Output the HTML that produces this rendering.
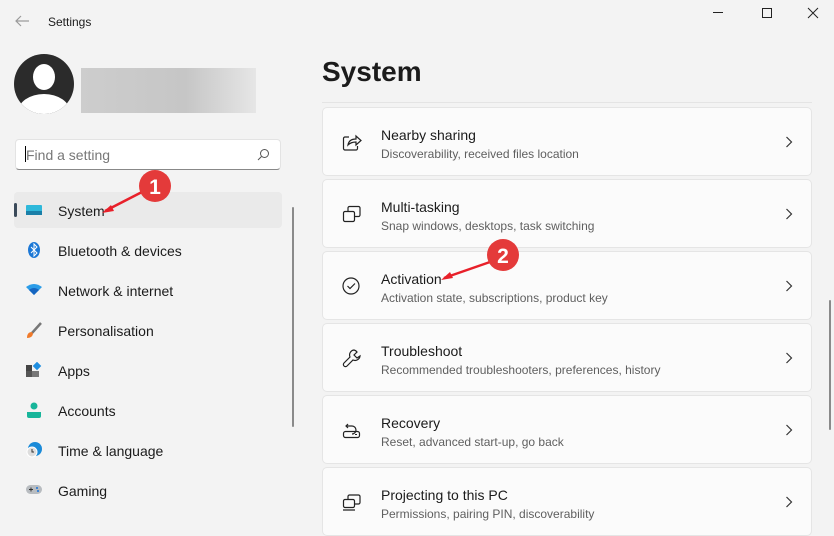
<!DOCTYPE html>
<html><head><style>
*{margin:0;padding:0;box-sizing:border-box}
body{width:834px;height:526px;overflow:hidden;background:#f3f3f3;font-family:"Liberation Sans",sans-serif;color:#1b1b1b;position:relative}
.abs{position:absolute}
.nav{position:absolute;left:14px;width:268px;height:36px;font-size:14px;display:flex;align-items:center}
.nav span{position:absolute;left:44px;top:11px}
.nav .ic{position:absolute;left:12px;top:10px;width:16px;height:16px}
.card{position:absolute;left:322px;width:490px;height:69px;background:#fbfbfb;border:1px solid #e5e5e5;border-radius:5px}
.card .t{position:absolute;left:58px;top:19px;font-size:14px;color:#1b1b1b}
.card .s{position:absolute;left:58px;top:39px;font-size:12px;color:#5f5f5f}
.card svg.i{position:absolute;left:19px;top:24px}
.card .ch{position:absolute;right:18px;top:28px}
</style></head><body>
<svg class="abs" style="left:14px;top:14px" width="16" height="14"><path d="M15 7H2M7 2L2 7l5 5" stroke="#9a9a9a" stroke-width="1.2" fill="none"/></svg>
<div class="abs" style="left:48px;top:15px;font-size:12px">Settings</div>
<svg class="abs" style="left:712px;top:6px" width="112" height="16"><path d="M1 6.5h10" stroke="#222"/><rect x="50.5" y="2.5" width="9" height="9" fill="none" stroke="#222"/><path d="M96 2l10 10M106 2l-10 10" stroke="#222"/></svg>
<svg class="abs" style="left:14px;top:54px" width="60" height="60"><defs><clipPath id="c"><circle cx="30" cy="30" r="30"/></clipPath></defs><circle cx="30" cy="30" r="30" fill="#2b2b2b"/><g clip-path="url(#c)" fill="#fff"><ellipse cx="30" cy="23" rx="11" ry="13"/><ellipse cx="30" cy="58" rx="26" ry="18"/></g></svg>
<div class="abs" style="left:81px;top:68px;width:175px;height:45px;background:linear-gradient(90deg,#cdcdcd,#c6c6c6 60%,#e6e6e6)"></div>
<div class="abs" style="left:15px;top:139px;width:266px;height:31px;background:#fff;border:1px solid #e3e3e3;border-bottom:1px solid #888;border-radius:4px"></div>
<div class="abs" style="left:25px;top:146px;width:1px;height:16px;background:#000"></div>
<div class="abs" style="left:26px;top:147px;font-size:14px;color:#777">Find a setting</div>
<svg class="abs" style="left:257px;top:148px" width="13" height="13"><circle cx="7.5" cy="5.5" r="4" fill="none" stroke="#555"/><path d="M4.5 8.5L1 12" stroke="#555"/></svg>
<div class="abs" style="left:14px;top:192px;width:268px;height:36px;background:#eaeaea;border-radius:4px"></div>
<div class="abs" style="left:14px;top:203px;width:3px;height:14px;background:#3a4a5a;border-radius:2px"></div>
<div class="nav" style="top:192px"><svg class="ic" width="16" height="16"><rect x="0" y="3" width="16" height="10" rx="1" fill="#2eb8da"/><rect x="0" y="9" width="16" height="4" fill="#1a7fa8"/></svg><span>System</span></div>
<div class="nav" style="top:232px"><svg class="ic" width="16" height="16"><ellipse cx="8" cy="8" rx="6" ry="8" fill="#1c78d6"/><path d="M5 5l6 6-3 3V2l3 3-6 6" stroke="#fff" fill="none"/></svg><span>Bluetooth &amp; devices</span></div>
<div class="nav" style="top:272px"><svg class="ic" width="16" height="16"><path d="M0 5Q8-1 16 5L8 13Z" fill="#2a9ce8"/><path d="M3 8Q8 4 13 8L8 13Z" fill="#1565c0"/></svg><span>Network &amp; internet</span></div>
<div class="nav" style="top:312px"><svg class="ic" width="16" height="16"><path d="M15 1L6 11" stroke="#777" stroke-width="2.5"/><path d="M1 16Q1 10 6 10l1 2Q6 16 1 16Z" fill="#f07a2a"/></svg><span>Personalisation</span></div>
<div class="nav" style="top:352px"><svg class="ic" width="16" height="16"><rect x="0" y="3" width="6" height="6" fill="#444"/><rect x="0" y="9" width="6" height="6" fill="#555"/><rect x="6" y="9" width="7" height="6" fill="#777"/><rect x="8" y="1" width="6" height="6" fill="#1f8ee0" transform="rotate(45 11 4)"/></svg><span>Apps</span></div>
<div class="nav" style="top:392px"><svg class="ic" width="16" height="16"><circle cx="8" cy="4" r="3.5" fill="#17b59a"/><path d="M1 10h14v4a2 2 0 0 1-2 2H3a2 2 0 0 1-2-2z" fill="#17b59a"/></svg><span>Accounts</span></div>
<div class="nav" style="top:432px"><svg class="ic" width="16" height="16"><circle cx="9" cy="7" r="7" fill="#1a8ad8"/><circle cx="6" cy="10" r="5" fill="#ddd" stroke="#fff"/><path d="M6 7v3h2" stroke="#333" fill="none"/></svg><span>Time &amp; language</span></div>
<div class="nav" style="top:472px"><svg class="ic" width="16" height="16"><rect x="0" y="3" width="16" height="9" rx="4.5" fill="#b8bcc0"/><path d="M3 7.5h4M5 5.5v4" stroke="#333"/><circle cx="11" cy="6" r="1" fill="#1a73d8"/><circle cx="12" cy="9" r="1" fill="#1a73d8"/></svg><span>Gaming</span></div>
<div class="abs" style="left:292px;top:207px;width:2px;height:220px;background:#8a8a8a;border-radius:1px"></div>
<div class="abs" style="left:322px;top:56px;font-size:28px;font-weight:bold;color:#1b1b1b">System</div>
<div class="abs" style="left:322px;top:102px;width:490px;height:1px;background:#e4e4e4"></div>

<div class="card" style="top:107px"><svg class="i" width="20" height="20"><path d="M7 5H3a1.5 1.5 0 0 0-1.5 1.5v10A1.5 1.5 0 0 0 3 18h11a1.5 1.5 0 0 0 1.5-1.5V14" fill="none" stroke="#222" stroke-width="1.2"/><path d="M6 13Q7 7 14 7V4l5 4.5-5 4.5v-3Q9 10 6 13Z" fill="none" stroke="#222" stroke-width="1.2"/></svg><div class="t">Nearby sharing</div><div class="s">Discoverability, received files location</div><svg class="ch" width="8" height="12"><path d="M1.5 1l5 5-5 5" stroke="#333" stroke-width="1.2" fill="none"/></svg></div>
<div class="card" style="top:179px"><svg class="i" width="20" height="20"><rect x="1.5" y="7.5" width="11" height="10" rx="1.5" fill="none" stroke="#222" stroke-width="1.2"/><path d="M6 7.5V4a1.5 1.5 0 0 1 1.5-1.5h9A1.5 1.5 0 0 1 18 4v7a1.5 1.5 0 0 1-1.5 1.5h-4" fill="none" stroke="#222" stroke-width="1.2"/></svg><div class="t">Multi-tasking</div><div class="s">Snap windows, desktops, task switching</div><svg class="ch" width="8" height="12"><path d="M1.5 1l5 5-5 5" stroke="#333" stroke-width="1.2" fill="none"/></svg></div>
<div class="card" style="top:251px"><svg class="i" width="20" height="20"><circle cx="9" cy="10" r="8" fill="none" stroke="#222" stroke-width="1.2"/><path d="M5.5 10l2.5 2.5 5-5" fill="none" stroke="#222" stroke-width="1.2"/></svg><div class="t">Activation</div><div class="s">Activation state, subscriptions, product key</div><svg class="ch" width="8" height="12"><path d="M1.5 1l5 5-5 5" stroke="#333" stroke-width="1.2" fill="none"/></svg></div>
<div class="card" style="top:323px"><svg class="i" width="20" height="20"><path d="M12 2a5 5 0 0 0-4 7L2 15a2 2 0 0 0 3 3l6-6a5 5 0 0 0 7-4l-3 2-3-3 3-3a5 5 0 0 0-3-2z" fill="none" stroke="#222" stroke-width="1.2"/></svg><div class="t">Troubleshoot</div><div class="s">Recommended troubleshooters, preferences, history</div><svg class="ch" width="8" height="12"><path d="M1.5 1l5 5-5 5" stroke="#333" stroke-width="1.2" fill="none"/></svg></div>
<div class="card" style="top:395px"><svg class="i" width="20" height="20"><path d="M6 4l-2 2 2 2M4 6h6a4 4 0 0 1 0 8" fill="none" stroke="#222" stroke-width="1.2"/><rect x="1.5" y="11.5" width="16" height="6" rx="2" fill="none" stroke="#222" stroke-width="1.2"/><path d="M13 14.5h2" stroke="#222"/></svg><div class="t">Recovery</div><div class="s">Reset, advanced start-up, go back</div><svg class="ch" width="8" height="12"><path d="M1.5 1l5 5-5 5" stroke="#333" stroke-width="1.2" fill="none"/></svg></div>
<div class="card" style="top:467px"><svg class="i" width="20" height="20"><rect x="1.5" y="7.5" width="11" height="8" rx="1.5" fill="none" stroke="#222" stroke-width="1.2"/><path d="M6 7.5V4.5a1.5 1.5 0 0 1 1.5-1.5h9A1.5 1.5 0 0 1 18 4.5v6a1.5 1.5 0 0 1-1.5 1.5h-4M1 18h12" fill="none" stroke="#222" stroke-width="1.2"/></svg><div class="t">Projecting to this PC</div><div class="s">Permissions, pairing PIN, discoverability</div><svg class="ch" width="8" height="12"><path d="M1.5 1l5 5-5 5" stroke="#333" stroke-width="1.2" fill="none"/></svg></div>
<div class="abs" style="left:829px;top:300px;width:2px;height:130px;background:#8a8a8a;border-radius:1px"></div>

<svg class="abs" style="left:0;top:0" width="834" height="526">
<path d="M105 211L142 192" stroke="#e8202a" stroke-width="2.5"/><path d="M102 213l9-8 3 6z" fill="#e8202a"/>
<circle cx="155" cy="186" r="16" fill="#e43a3a"/><text x="155" y="194" text-anchor="middle" font-family="Liberation Sans" font-weight="bold" font-size="21" fill="#fff">1</text>
<path d="M444 278L490 262" stroke="#e8202a" stroke-width="2.5"/><path d="M441 280l9-8 3 6z" fill="#e8202a"/>
<circle cx="503" cy="255" r="16" fill="#e43a3a"/><text x="503" y="263" text-anchor="middle" font-family="Liberation Sans" font-weight="bold" font-size="21" fill="#fff">2</text>
</svg>
</body></html>
